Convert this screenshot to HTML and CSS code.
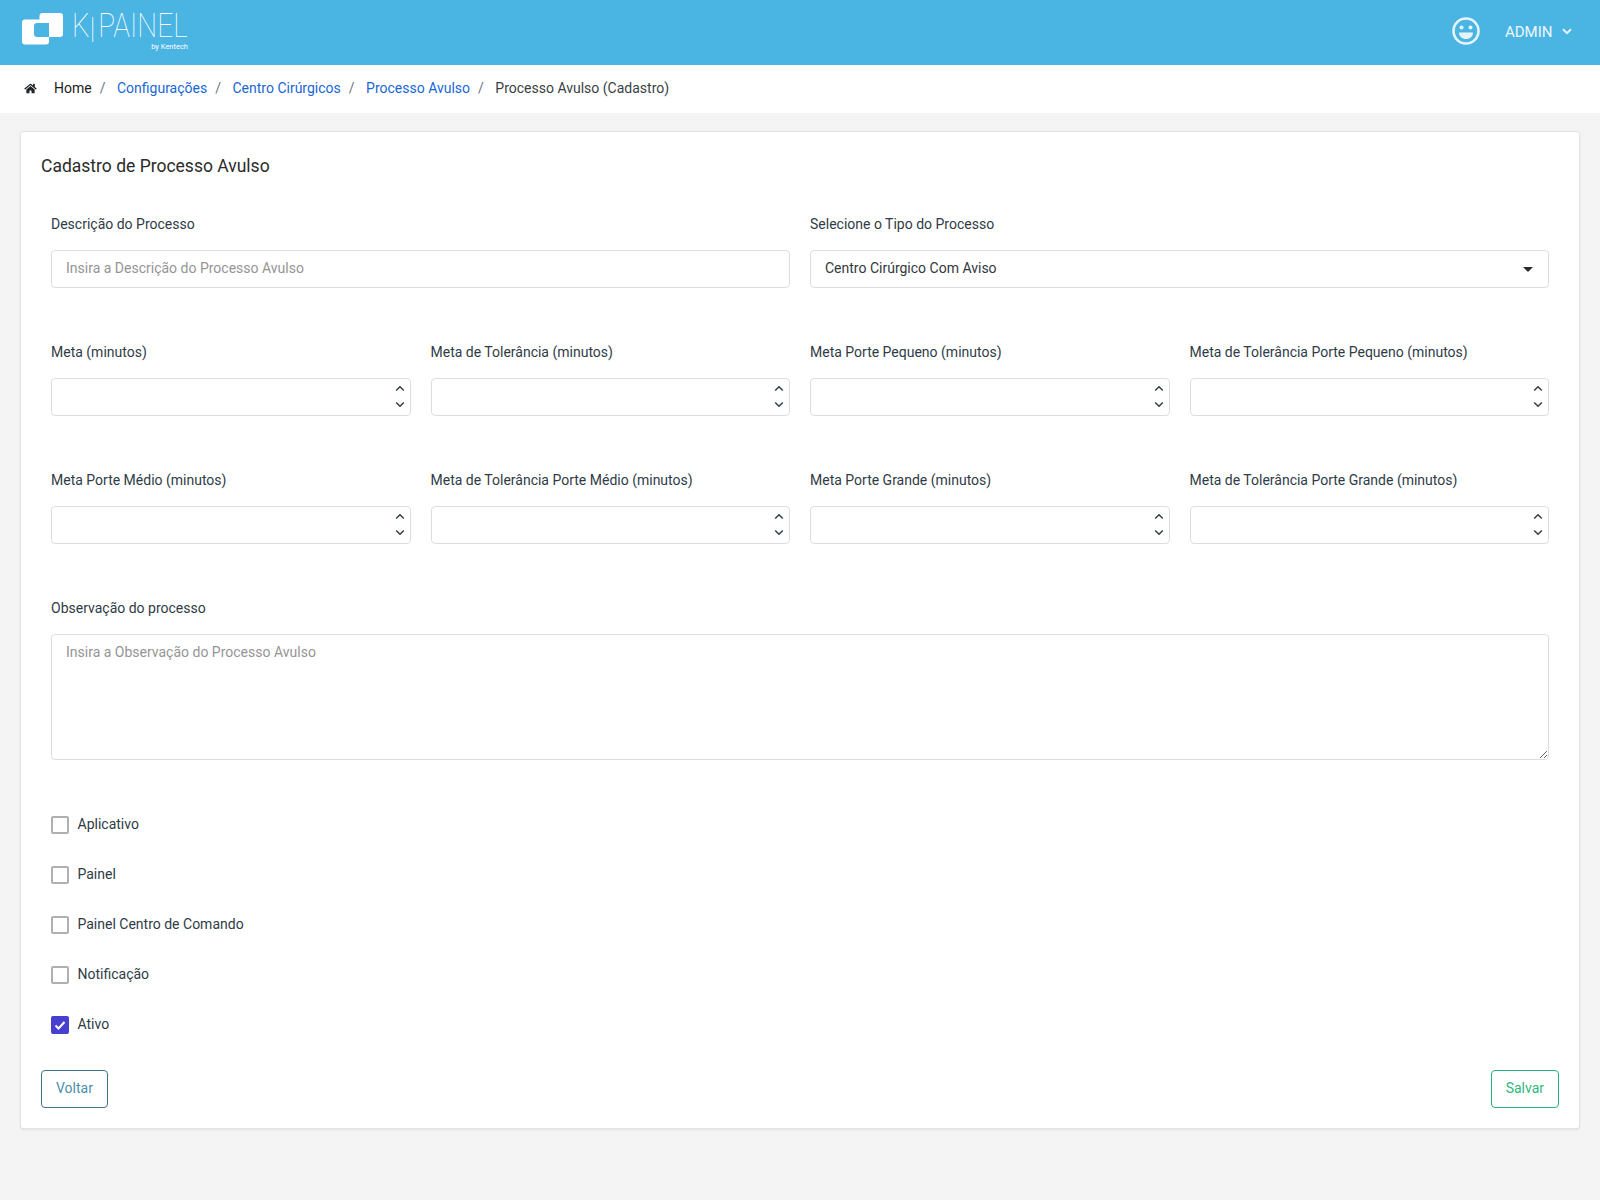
FILE: index.html

```html
<!DOCTYPE html>
<html lang="pt-BR">
<head>
    <meta charset="UTF-8">
    <title>Cadastro de Processo Avulso</title>
    <link rel="stylesheet" href="styles.css">
</head>
<body>

    <header class="topbar">
        <div class="logo">
            <svg class="logo-mark" width="42" height="33" viewBox="0 0 42 33">
                <path fill="#fff" fill-rule="evenodd" d="M3 6.500H17.500V3a3 3 0 0 1 3-3H38a3 3 0 0 1 3 3V21a3 3 0 0 1-3 3H27V28.500a3 3 0 0 1-3 3H3a3 3 0 0 1-3-3V9.500a3 3 0 0 1 3-3zM15 10H27V24H15a3 3 0 0 1-3-3V13a3 3 0 0 1 3-3z"/>
            </svg>
            <div class="logo-text">
                <span class="logo-name">K<i class="logo-bar"></i>PAINEL</span>
                <span class="logo-by">by Kentech</span>
            </div>
        </div>
        <div class="user">
            <svg class="smile" width="28" height="28" viewBox="0 0 28 28">
                <circle cx="14" cy="14" r="12.5" fill="none" stroke="#e6f5fb" stroke-width="2.6"/>
                <circle cx="9.5" cy="10.5" r="2" fill="#e6f5fb"/>
                <circle cx="18.5" cy="10.5" r="2" fill="#e6f5fb"/>
                <path fill="#e6f5fb" d="M7 15.500h14c0 4-3 6.500-7 6.500s-7-2.500-7-6.500z"/>
            </svg>
            <span class="user-name">ADMIN</span>
            <svg class="user-caret" width="10" height="7" viewBox="0 0 10 7"><path fill="none" stroke="#e6f5fb" stroke-width="2" d="M1 1.200l4 4 4-4"/></svg>
        </div>
    </header>

    <nav class="breadcrumb">
        <svg class="home-icon" width="13" height="11" viewBox="0 0 576 512"><path fill="#212529" d="M280 148L96 300v164a16 16 0 0 0 16 16l112-.3a16 16 0 0 0 16-16V368a16 16 0 0 1 16-16h64a16 16 0 0 1 16 16v95.600a16 16 0 0 0 16 16.400l112 .3a16 16 0 0 0 16-16V300L296 148a12 12 0 0 0-16 0zM572 251l-84-69V44a12 12 0 0 0-12-12h-56a12 12 0 0 0-12 12v72l-89-74a48 48 0 0 0-61 0L4 251a12 12 0 0 0-2 17l26 31a12 12 0 0 0 17 2L280 107a12 12 0 0 1 16 0l235 194a12 12 0 0 0 17-2l26-31a12 12 0 0 0-2-17z"/></svg>
        <a class="crumb crumb-home" href="#">Home</a>
        <span class="sep">/</span>
        <a class="crumb" href="#">Configurações</a>
        <span class="sep">/</span>
        <a class="crumb" href="#">Centro Cirúrgicos</a>
        <span class="sep">/</span>
        <a class="crumb" href="#">Processo Avulso</a>
        <span class="sep">/</span>
        <span class="crumb-current">Processo Avulso (Cadastro)</span>
    </nav>

    <main class="page">
        <section class="card">
            <h1 class="card-title">Cadastro de Processo Avulso</h1>

            <div class="form-body">
                <div class="grid-2">
                    <div class="field">
                        <label>Descrição do Processo</label>
                        <input class="control" type="text" placeholder="Insira a Descrição do Processo Avulso">
                    </div>
                    <div class="field">
                        <label>Selecione o Tipo do Processo</label>
                        <div class="select-wrap">
                            <select class="control">
                                <option>Centro Cirúrgico Com Aviso</option>
                            </select>
                            <span class="select-caret"></span>
                        </div>
                    </div>
                </div>

                <div class="grid-4">
                    <div class="field">
                        <label>Meta (minutos)</label>
                        <div class="number-wrap">
                            <input class="control" type="text">
                            <svg class="spin" width="10" height="24" viewBox="0 0 10 24"><path d="M1.200 5.500L5 1.700l3.800 3.800M1.200 17.500L5 21.300l3.800-3.800"/></svg>
                        </div>
                    </div>
                    <div class="field">
                        <label>Meta de Tolerância (minutos)</label>
                        <div class="number-wrap">
                            <input class="control" type="text">
                            <svg class="spin" width="10" height="24" viewBox="0 0 10 24"><path d="M1.200 5.500L5 1.700l3.800 3.800M1.200 17.500L5 21.300l3.800-3.800"/></svg>
                        </div>
                    </div>
                    <div class="field">
                        <label>Meta Porte Pequeno (minutos)</label>
                        <div class="number-wrap">
                            <input class="control" type="text">
                            <svg class="spin" width="10" height="24" viewBox="0 0 10 24"><path d="M1.200 5.500L5 1.700l3.800 3.800M1.200 17.500L5 21.300l3.800-3.800"/></svg>
                        </div>
                    </div>
                    <div class="field">
                        <label>Meta de Tolerância Porte Pequeno (minutos)</label>
                        <div class="number-wrap">
                            <input class="control" type="text">
                            <svg class="spin" width="10" height="24" viewBox="0 0 10 24"><path d="M1.200 5.500L5 1.700l3.800 3.800M1.200 17.500L5 21.300l3.800-3.800"/></svg>
                        </div>
                    </div>
                    <div class="field">
                        <label>Meta Porte Médio (minutos)</label>
                        <div class="number-wrap">
                            <input class="control" type="text">
                            <svg class="spin" width="10" height="24" viewBox="0 0 10 24"><path d="M1.200 5.500L5 1.700l3.800 3.800M1.200 17.500L5 21.300l3.800-3.800"/></svg>
                        </div>
                    </div>
                    <div class="field">
                        <label>Meta de Tolerância Porte Médio (minutos)</label>
                        <div class="number-wrap">
                            <input class="control" type="text">
                            <svg class="spin" width="10" height="24" viewBox="0 0 10 24"><path d="M1.200 5.500L5 1.700l3.800 3.800M1.200 17.500L5 21.300l3.800-3.800"/></svg>
                        </div>
                    </div>
                    <div class="field">
                        <label>Meta Porte Grande (minutos)</label>
                        <div class="number-wrap">
                            <input class="control" type="text">
                            <svg class="spin" width="10" height="24" viewBox="0 0 10 24"><path d="M1.200 5.500L5 1.700l3.800 3.800M1.200 17.500L5 21.300l3.800-3.800"/></svg>
                        </div>
                    </div>
                    <div class="field">
                        <label>Meta de Tolerância Porte Grande (minutos)</label>
                        <div class="number-wrap">
                            <input class="control" type="text">
                            <svg class="spin" width="10" height="24" viewBox="0 0 10 24"><path d="M1.200 5.500L5 1.700l3.800 3.800M1.200 17.500L5 21.300l3.800-3.800"/></svg>
                        </div>
                    </div>
                </div>

                <div class="field field-notes">
                    <label>Observação do processo</label>
                    <textarea class="control notes" placeholder="Insira a Observação do Processo Avulso"></textarea>
                </div>

                <div class="checks">
                    <label class="check"><input type="checkbox"><span>Aplicativo</span></label>
                    <label class="check"><input type="checkbox"><span>Painel</span></label>
                    <label class="check"><input type="checkbox"><span>Painel Centro de Comando</span></label>
                    <label class="check"><input type="checkbox"><span>Notificação</span></label>
                    <label class="check"><input type="checkbox" checked><span>Ativo</span></label>
                </div>
            </div>

            <div class="actions">
                <button class="btn btn-back">Voltar</button>
                <button class="btn btn-save">Salvar</button>
            </div>
        </section>
    </main>

</body>
</html>
```

FILE: styles.css

```css
* {
    box-sizing: border-box;
}
body {
    margin: 0;
    min-height: 1200px;
    background: #f4f4f4;
    font-family: Roboto, "Liberation Sans", sans-serif;
    font-size: 14px;
    color: #2b2f33;
}
.topbar {
    height: 65px;
    background: #4ab4e3;
    display: flex;
    justify-content: space-between;
    align-items: center;
    padding: 0 28.500px 0 22px;
}
.logo {
    display: flex;
    align-items: flex-start;
    align-self: flex-start;
    padding-top: 13px;
}
.logo-mark {
    margin-right: 8px;
}
.logo-text {
    display: flex;
    flex-direction: column;
    align-items: flex-end;
    width: 116px;
    color: #fff;
}
.logo-name {
    display: flex;
    align-items: flex-start;
    align-self: flex-start;
    font-weight: 100;
    font-size: 33px;
    line-height: 26px;
    height: 29px;
    transform: scaleX(0.85);
    transform-origin: left;
}
.logo-bar {
    display: block;
    width: 1px;
    height: 25px;
    margin: 4px 6px 0 3px;
    background: #fff;
}
.logo-by {
    font-size: 7.500px;
    line-height: 10px;
}
.user {
    display: flex;
    align-items: center;
    margin-top: -2px;
    color: #eef8fc;
}
.smile {
    margin-right: 25px;
    margin-top: -1px;
}
.user-name {
    font-size: 15px;
    margin-right: 9px;
}
.breadcrumb {
    height: 48px;
    background: #fff;
    display: flex;
    align-items: center;
    padding: 0 0 2px 24px;
}
.home-icon {
    margin-right: 17px;
}
.crumb {
    color: #1a66d6;
    text-decoration: none;
}
.crumb-home {
    color: #1c1c1c;
}
.sep {
    color: #6c757d;
    margin: 0 11.500px 0 8px;
}
.crumb-current {
    color: #3a3f44;
}
.page {
    padding: 18px 20px;
}
.card {
    height: 998px;
    background: #fff;
    border: 1px solid #e3e3e3;
    border-radius: 3px;
    box-shadow: 0 1px 2px rgba(0, 0, 0, 0.08);
    padding: 24px 20px 0;
}
.card-title {
    margin: 0 0 37px;
    font-size: 17.500px;
    font-weight: 400;
    line-height: 21px;
    color: #2b2b2b;
}
.form-body {
    padding: 0 10px;
}
.grid-2,
.grid-4 {
    display: grid;
    column-gap: 20px;
}
.grid-2 {
    grid-template-columns: repeat(2, 1fr);
}
.grid-4 {
    grid-template-columns: repeat(4, 1fr);
}
.field {
    margin-bottom: 54px;
}
.field > label {
    display: block;
    line-height: 20px;
    margin-bottom: 16px;
    color: #2f3b46;
}
.control {
    display: block;
    width: 100%;
    height: 38px;
    padding: 0 14px 2px;
    border: 1px solid #dedede;
    border-radius: 4px;
    background: #fff;
    font-family: inherit;
    font-size: 14px;
    color: #33383d;
    outline: none;
}
.control::placeholder {
    color: #959595;
}
select.control {
    appearance: none;
}
.select-wrap,
.number-wrap {
    position: relative;
}
.select-caret {
    position: absolute;
    right: 16px;
    top: 17px;
    border-top: 5px solid #2b2b2b;
    border-left: 5px solid transparent;
    border-right: 5px solid transparent;
}
.spin {
    position: absolute;
    right: 6px;
    top: 7px;
}
.spin path {
    fill: none;
    stroke: #33404a;
    stroke-width: 1.500;
}
.field-notes {
    margin-bottom: 54px;
}
.notes {
    height: 126px;
    padding: 9px 14px;
    resize: vertical;
    line-height: 17px;
}
.checks {
    display: flex;
    flex-direction: column;
    gap: 30px;
}
.check {
    display: flex;
    align-items: center;
    height: 20px;
    color: #2f3b46;
}
.check input {
    appearance: none;
    width: 18px;
    height: 18px;
    margin: 2px 8.500px 0 0;
    border: 2px solid #b0b0b0;
    border-radius: 2px;
    background: #fff;
}
.check input:checked {
    border-color: #463fd0;
    background: #463fd0 url("data:image/svg+xml,%3Csvg xmlns='http://www.w3.org/2000/svg' viewBox='0 0 14 14'%3E%3Cpath d='M2.500 7.500l3 3 6-6.500' fill='none' stroke='white' stroke-width='2'/%3E%3C/svg%3E") center / 14px no-repeat;
}
.actions {
    display: flex;
    justify-content: space-between;
    margin-top: 36px;
}
.btn {
    height: 38px;
    padding: 0 14px 2px;
    border-radius: 4px;
    background: #fff;
    font-family: inherit;
    font-size: 14px;
    cursor: pointer;
}
.btn-back {
    border: 1px solid #3d7387;
    color: #4a8fb0;
}
.btn-save {
    border: 1px solid #23b574;
    color: #2fb87e;
}
```
